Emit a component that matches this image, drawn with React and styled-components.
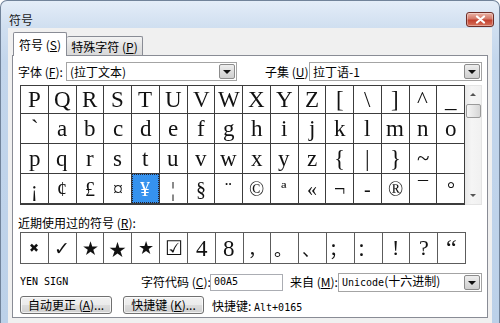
import React from 'react';
import styled, { createGlobalStyle } from 'styled-components';

const Global = createGlobalStyle`
  html, body { margin: 0; padding: 0; background: #fff; }
  body {
    width: 500px; height: 323px; overflow: hidden;
    font-family: "Noto Sans CJK SC", "Noto Sans", sans-serif;
    font-size: 12px; color: #000;
  }
  #root { width: 500px; height: 323px; }
`;

const Window = styled.div`
  box-sizing: border-box;
  width: 500px;
  height: 323px;
  display: flex;
  flex-direction: column;
  background: linear-gradient(180deg, #e4edf8 0px, #d0dff0 26px, #c3d6ec 60px, #bcd1e9 100%);
  border: 1px solid #71839a;
  border-bottom: none;
  border-radius: 7px 7px 0 0;
  padding: 0 7px;
`;

const TitleBar = styled.div`
  box-sizing: border-box;
  height: 27px;
  padding-top: 10px;
  display: flex;
  align-items: center;
  justify-content: space-between;
`;

const Title = styled.span`
  padding-left: 1px;
  font-size: 12px;
  line-height: 17px;
  color: #1a1a1a;
`;

const CloseButton = styled.div`
  box-sizing: border-box;
  width: 28px;
  height: 15px;
  margin-right: -2px;
  border: 1px solid #6e2e28;
  border-radius: 3px;
  background: linear-gradient(180deg, #eab3a6 0%, #d47868 45%, #c2402f 55%, #d7735c 100%);
  display: flex;
  align-items: center;
  justify-content: center;
  box-shadow: inset 0 0 0 1px rgba(255, 255, 255, 0.35);
`;

const Client = styled.div`
  flex: 1;
  display: flex;
  flex-direction: column;
  background: #f0f0f0;
  padding: 4px 4px 5px;
  min-height: 0;
`;

const Tabs = styled.div`
  display: flex;
  align-items: flex-end;
  height: 23px;
  padding-left: 1px;
  position: relative;
  z-index: 1;
`;

const Tab = styled.div`
  box-sizing: border-box;
  width: ${(p) => p.$w}px;
  height: ${(p) => (p.$active ? 24 : 19)}px;
  margin-bottom: ${(p) => (p.$active ? -1 : 0)}px;
  border: 1px solid #898c95;
  border-bottom: none;
  border-left-width: ${(p) => (p.$active ? 1 : 0)}px;
  border-radius: 2px 2px 0 0;
  background: ${(p) => (p.$active ? '#fff' : 'linear-gradient(180deg, #f3f3f3, #e3e3e3 50%, #d9d9d9)')};
  display: flex;
  align-items: center;
  justify-content: center;
  font-size: 12px;
  padding-bottom: ${(p) => (p.$active ? 1 : 0)}px;
`;

const Panel = styled.div`
  flex: 1;
  background: #fff;
  border: 1px solid #898c95;
  padding: 6px 4px 0 5px;
  display: flex;
  flex-direction: column;
  min-height: 0;
`;

const Mn = styled.span`
  text-decoration: underline;
  text-underline-offset: 1px;
`;

const FieldRow = styled.div`
  display: flex;
  align-items: center;
  height: ${(p) => p.$h || 19}px;
  margin-top: ${(p) => p.$mt || 0}px;
  margin-left: ${(p) => p.$ml || 0}px;
`;

const Label = styled.span`
  box-sizing: border-box;
  width: ${(p) => p.$w}px;
  margin-left: ${(p) => p.$ml || 0}px;
  flex: none;
  white-space: nowrap;
  font-size: 12px;
  line-height: 14px;
`;

const Combo = styled.div`
  box-sizing: border-box;
  width: ${(p) => p.$w}px;
  height: ${(p) => p.$h || 19}px;
  flex: none;
  border: 1px solid #a4a4a4;
  background: #fff;
  display: flex;
  align-items: center;
  padding-left: 3px;
`;

const ComboText = styled.span`
  flex: 1;
  white-space: nowrap;
  font-size: 12px;
  line-height: 14px;
`;

const MonoBit = styled.span`
  font-family: "DejaVu Sans Mono", monospace;
  font-size: 10px;
`;

const DropButton = styled.div`
  box-sizing: border-box;
  width: 16px;
  height: calc(100% - 2px);
  margin-right: 1px;
  border: 1px solid #8c8c8c;
  border-radius: 2px;
  background: linear-gradient(180deg, #eeeeee, #dddddd 50%, #cfcfcf);
  display: flex;
  align-items: center;
  justify-content: center;
  &::after {
    content: "";
    border-left: 4px solid transparent;
    border-right: 4px solid transparent;
    border-top: 4px solid #111;
    margin-top: 1px;
  }
`;

const GridWrap = styled.div`
  display: flex;
  margin-top: 4px;
  margin-left: 2px;
  height: 120px;
`;

const CharGrid = styled.div`
  box-sizing: border-box;
  width: 445px;
  height: 120px;
  display: grid;
  grid-template-columns: repeat(16, 1fr);
  grid-template-rows: 27px 29px 29px 29px;
  gap: 1px;
  padding: 1px 1px 2px;
  background: #3c3c3c;
`;

const Cell = styled.div`
  background: ${(p) => (p.$sel ? '#3592ee' : '#fff')};
  color: ${(p) => (p.$sel ? '#fff' : '#111')};
  outline: ${(p) => (p.$sel ? '1px dotted #223' : 'none')};
  outline-offset: -1px;
  display: flex;
  align-items: center;
  justify-content: ${(p) => p.$just || 'center'};
  padding-left: ${(p) => p.$pl || 0}px;
  font-family: ${(p) => p.$font || '"Liberation Serif", "DejaVu Serif", serif'};
  font-size: ${(p) => p.$size || 22}px;
  line-height: 1;
  overflow: hidden;
`;

const Glyph = styled.span`
  display: block;
  will-change: transform;
`;

const ScrollBar = styled.div`
  box-sizing: border-box;
  width: 17px;
  height: 120px;
  display: flex;
  flex-direction: column;
  align-items: center;
  background: linear-gradient(90deg, #e8e8e8, #f5f5f5 40%, #f1f1f1);
  border: 1px solid #e4e4e4;
  border-left: none;
`;

const Arrow = styled.div`
  height: 17px;
  width: 15px;
  display: flex;
  align-items: center;
  justify-content: center;
  &::after {
    content: "";
    border-left: 3px solid transparent;
    border-right: 3px solid transparent;
    ${(p) => (p.$down ? 'border-top: 3px solid #555;' : 'border-bottom: 3px solid #555;')}
  }
`;

const Thumb = styled.div`
  box-sizing: border-box;
  width: 15px;
  height: 14px;
  margin-top: 1px;
  border: 1px solid #9a9a9a;
  border-radius: 2px;
  background: linear-gradient(90deg, #f4f4f4, #e6e6e6 50%, #d6d6d6);
`;

const Spacer = styled.div`
  flex: 1;
`;

const RecentGrid = styled.div`
  box-sizing: border-box;
  width: 446px;
  height: 32px;
  margin-top: 2px;
  margin-left: 2px;
  display: grid;
  grid-template-columns: repeat(16, 1fr);
  gap: 1px;
  padding: 1px;
  background: #5c5c5c;
`;

const CodeInput = styled.div`
  box-sizing: border-box;
  width: 73px;
  height: 17px;
  flex: none;
  border: 1px solid #abadb3;
  background: #fff;
  padding-left: 3px;
  display: flex;
  align-items: center;
`;

const MonoText = styled.span`
  font-family: "DejaVu Sans Mono", "Liberation Mono", monospace;
  font-size: 10px;
  line-height: 12px;
  white-space: nowrap;
  width: ${(p) => (p.$w ? `${p.$w}px` : 'auto')};
  flex: none;
`;

const Button = styled.div`
  box-sizing: border-box;
  width: ${(p) => p.$w}px;
  height: 18px;
  margin-left: ${(p) => p.$ml || 0}px;
  flex: none;
  border: 1px solid #707070;
  border-radius: 3px;
  background: linear-gradient(180deg, #f2f2f2 0%, #ebebeb 50%, #dddddd 51%, #cfcfcf 100%);
  box-shadow: inset 0 0 0 1px rgba(255, 255, 255, 0.7);
  display: flex;
  align-items: center;
  justify-content: center;
  font-size: 12px;
  line-height: 14px;
  white-space: nowrap;
`;

const ShortcutText = styled.span`
  margin-left: 8px;
  white-space: nowrap;
  font-size: 12px;
`;

const rows = [
  ['P', 'Q', 'R', 'S', 'T', 'U', 'V', 'W', 'X', 'Y', 'Z', '[', '\\', ']', '^', '_'],
  ['`', 'a', 'b', 'c', 'd', 'e', 'f', 'g', 'h', 'i', 'j', 'k', 'l', 'm', 'n', 'o'],
  ['p', 'q', 'r', 's', 't', 'u', 'v', 'w', 'x', 'y', 'z', '{', '|', '}', '~', ''],
  ['¡', '¢', '£', '¤', '¥', '¦', '§', '¨', '©', 'ª', '«', '¬', '-', '®', '¯', '°'],
];

const cjk = '"Noto Sans CJK SC", sans-serif';
const dv = '"DejaVu Sans", sans-serif';

const recent = [
  { c: '✖', size: 12, font: dv },
  { c: '✓', size: 19, font: dv },
  { c: '★', size: 19, font: dv },
  { c: '★', size: 17, font: cjk },
  { c: '★', size: 18, font: dv },
  { c: '☑', size: 20, font: dv },
  { c: '4', size: 23 },
  { c: '8', size: 23 },
  { c: '，', size: 18, font: cjk, just: 'flex-start', pl: 4 },
  { c: '。', size: 18, font: cjk, just: 'flex-start', pl: 3 },
  { c: '、', size: 18, font: cjk, just: 'flex-start', pl: 3 },
  { c: '；', size: 18, font: cjk, just: 'flex-start', pl: 2 },
  { c: '：', size: 18, font: cjk, just: 'flex-start', pl: 2 },
  { c: '!', size: 22 },
  { c: '?', size: 22 },
  { c: '“', size: 24 },
];

export default function App() {
  return (
    <>
      <Global />
      <Window>
        <TitleBar>
          <Title>符号</Title>
          <CloseButton>
            <svg width="11" height="9" viewBox="0 0 11 9">
              <path d="M2 1.5 L9 7.5 M9 1.5 L2 7.5" stroke="#fff" strokeWidth="2.2" strokeLinecap="round" />
            </svg>
          </CloseButton>
        </TitleBar>
        <Client>
          <Tabs>
            <Tab $active $w={54}>符号 (<Mn>S</Mn>)</Tab>
            <Tab $w={76}>特殊字符 (<Mn>P</Mn>)</Tab>
          </Tabs>
          <Panel>
            <FieldRow>
              <Label $w={48}>字体 (<Mn>F</Mn>):</Label>
              <Combo $w={171}>
                <ComboText>(拉丁文本)</ComboText>
                <DropButton />
              </Combo>
              <Label $w={44} $ml={28}>子集 (<Mn>U</Mn>):</Label>
              <Combo $w={173}>
                <ComboText>拉丁语-1</ComboText>
                <DropButton />
              </Combo>
            </FieldRow>
            <GridWrap>
              <CharGrid>
                {rows.map((r, ri) =>
                  r.map((ch, ci) => (
                    <Cell key={`${ri}-${ci}`} $sel={ri === 3 && ci === 4} $size={ri === 3 ? 20 : 23}>
                      <Glyph>{ch}</Glyph>
                    </Cell>
                  ))
                )}
              </CharGrid>
              <ScrollBar>
                <Arrow />
                <Thumb />
                <Spacer />
                <Arrow $down />
              </ScrollBar>
            </GridWrap>
            <FieldRow $h={14} $mt={11}>
              <Label $w={200}>近期使用过的符号 (<Mn>R</Mn>):</Label>
            </FieldRow>
            <RecentGrid>
              {recent.map((r, i) => (
                <Cell key={i} $size={r.size} $font={r.font} $just={r.just} $pl={r.pl}>
                  <Glyph>{r.c}</Glyph>
                </Cell>
              ))}
            </RecentGrid>
            <FieldRow $h={18} $mt={9} $ml={2}>
              <MonoText $w={121}>YEN SIGN</MonoText>
              <Label $w={69}>字符代码 (<Mn>C</Mn>):</Label>
              <CodeInput>
                <MonoText>00A5</MonoText>
              </CodeInput>
              <Label $w={48} $ml={7}>来自 (<Mn>M</Mn>):</Label>
              <Combo $w={144} $h={19}>
                <ComboText>
                  <MonoBit>Unicode</MonoBit>(十六进制)
                </ComboText>
                <DropButton />
              </Combo>
            </FieldRow>
            <FieldRow $h={18} $mt={5} $ml={2}>
              <Button $w={92}>自动更正 (<Mn>A</Mn>)...</Button>
              <Button $w={81} $ml={11}>快捷键 (<Mn>K</Mn>)...</Button>
              <ShortcutText>
                快捷键: <MonoText>Alt+0165</MonoText>
              </ShortcutText>
            </FieldRow>
          </Panel>
        </Client>
      </Window>
    </>
  );
}
